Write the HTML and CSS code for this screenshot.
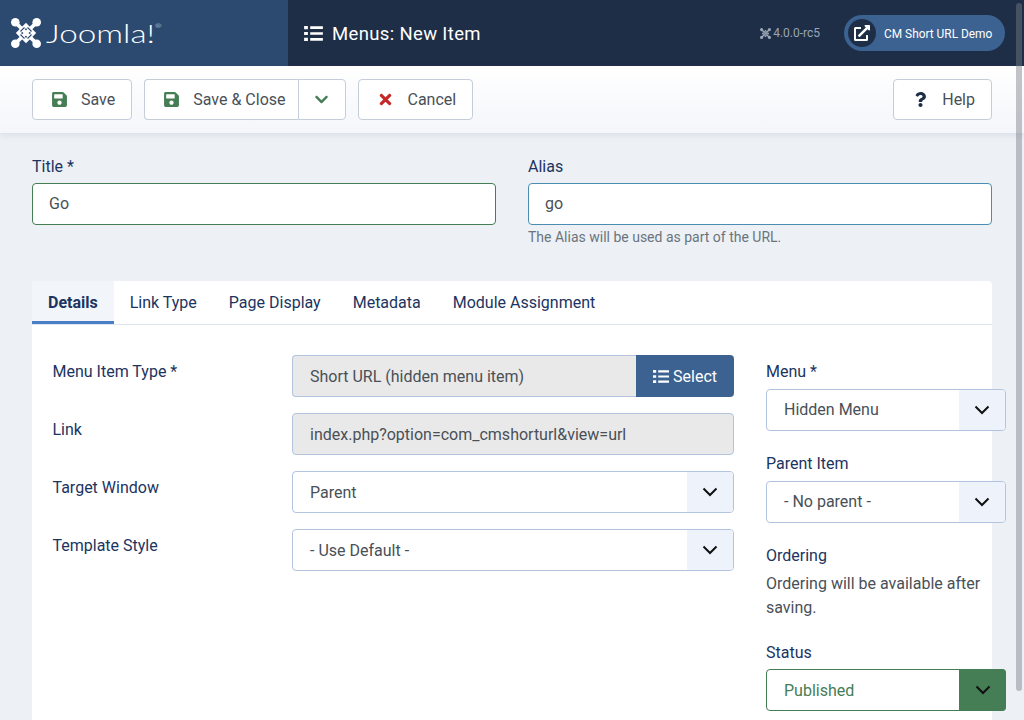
FILE: index.html
```html
<!DOCTYPE html>
<html lang="en">
<head>
    <meta charset="UTF-8">
    <meta name="viewport" content="width=device-width, initial-scale=1.0">
    <title>Menus: New Item</title>
    <link rel="stylesheet" href="styles.css">
</head>
<body>
    <!-- Icons -->
    <svg class="icon-defs" aria-hidden="true">
        <symbol id="i-save" viewBox="0 0 448 512"><path d="M433.941 129.941l-83.882-83.882A48 48 0 0 0 316.118 32H48C21.49 32 0 53.49 0 80v352c0 26.51 21.49 48 48 48h352c26.51 0 48-21.49 48-48V163.882a48 48 0 0 0-14.059-33.941zM224 416c-35.346 0-64-28.654-64-64 0-35.346 28.654-64 64-64s64 28.654 64 64c0 35.346-28.654 64-64 64zm96-304.52V212c0 6.627-5.373 12-12 12H76c-6.627 0-12-5.373-12-12V108c0-6.627 5.373-12 12-12h228.52c3.183 0 6.235 1.264 8.485 3.515l3.48 3.48A11.996 11.996 0 0 1 320 111.48z"/></symbol>
        <symbol id="i-times" viewBox="0 0 352 512"><path d="M242.72 256l100.07-100.07c12.28-12.28 12.28-32.19 0-44.48l-22.24-22.24c-12.28-12.28-32.19-12.28-44.48 0L176 189.28 75.93 89.21c-12.28-12.28-32.19-12.28-44.48 0L9.21 111.45c-12.28 12.28-12.28 32.19 0 44.48L109.28 256 9.21 356.07c-12.28 12.28-12.28 32.19 0 44.48l22.24 22.24c12.28 12.28 32.2 12.28 44.48 0L176 322.72l100.07 100.07c12.28 12.28 32.2 12.28 44.48 0l22.24-22.24c12.28-12.28 12.28-32.19 0-44.48L242.72 256z"/></symbol>
        <symbol id="i-chevron" viewBox="0 0 448 512"><path d="M207.029 381.476L12.686 187.132c-9.373-9.373-9.373-24.569 0-33.941l22.667-22.667c9.357-9.357 24.522-9.375 33.901-.04L224 284.505l154.745-154.021c9.379-9.335 24.544-9.317 33.901.04l22.667 22.667c9.373 9.373 9.373 24.569 0 33.941L240.971 381.476c-9.373 9.372-24.569 9.372-33.942 0z"/></symbol>
        <symbol id="i-caret" viewBox="0 0 16 10"><path d="M1.500 1.500L8 8l6.500-6.500" fill="none" stroke="currentColor" stroke-width="2"/></symbol>
        <symbol id="i-question" viewBox="0 0 384 512"><path d="M202.021 0C122.202 0 70.503 32.703 29.914 91.026c-7.363 10.58-5.093 25.086 5.178 32.874l43.138 32.709c10.373 7.865 25.132 6.026 33.253-4.148 25.049-31.381 43.63-49.449 82.757-49.449 30.764 0 68.816 19.799 68.816 49.631 0 22.552-18.617 34.134-48.993 51.164-35.423 19.86-82.299 44.576-82.299 106.405V320c0 13.255 10.745 24 24 24h72.471c13.255 0 24-10.745 24-24v-5.773c0-42.86 125.268-44.645 125.268-160.627C377.504 66.256 286.902 0 202.021 0zM192 373.459c-38.196 0-69.271 31.075-69.271 69.271 0 38.195 31.075 69.27 69.271 69.27s69.271-31.075 69.271-69.271-31.075-69.27-69.271-69.27z"/></symbol>
        <symbol id="i-external" viewBox="0 0 512 512"><path d="M432 320h-32a16 16 0 0 0-16 16v112H64V128h144a16 16 0 0 0 16-16V80a16 16 0 0 0-16-16H48a48 48 0 0 0-48 48v352a48 48 0 0 0 48 48h352a48 48 0 0 0 48-48V336a16 16 0 0 0-16-16zM488 0H360c-21.37 0-32.05 25.91-17 41l35.73 35.73L135 320.37a24 24 0 0 0 0 34L157.67 377a24 24 0 0 0 34 0l243.61-243.68L471 169c15 15 41 4.5 41-17V24a24 24 0 0 0-24-24z"/></symbol>
        <symbol id="i-list" viewBox="0 0 20 16"><path d="M0 0h4v3.400H0zM0 6.300h4v3.400H0zM0 12.600h4V16H0zM6.500.3H20v2.800H6.500zM6.500 6.600H20v2.800H6.500zM6.500 12.900H20v2.800H6.500z"/></symbol>
        <symbol id="i-joomla" viewBox="0 0 30 30">
            <g fill="none">
                <path class="mark-band" d="M15 7.500L22.500 15 15 22.500 7.500 15z"/>
                <path class="mark-gap" d="M4.500 4.500L12 12M25.500 4.500L18 12M25.500 25.500L18 18M4.500 25.500L12 18"/>
                <path class="mark-band" d="M4.500 4.500L12.500 12.500M25.500 4.500L17.500 12.500M25.500 25.500L17.500 17.500M4.500 25.500L12.500 17.500"/>
                <path class="mark-gap" d="M9.500 13.500L13.500 9.500M20.500 13.500L16.500 9.500M20.500 16.500L16.500 20.500M9.500 16.500L13.500 20.500"/>
                <path class="mark-band" d="M12 12L18 18M18 12L12 18"/>
            </g>
            <g fill="currentColor">
                <circle cx="4.300" cy="4.300" r="4.300"/>
                <circle cx="25.700" cy="4.300" r="4.300"/>
                <circle cx="25.700" cy="25.700" r="4.300"/>
                <circle cx="4.300" cy="25.700" r="4.300"/>
            </g>
        </symbol>
    </svg>

    <!-- Header -->
    <header class="header">
        <div class="brand">
            <svg class="brand-mark"><use href="#i-joomla"/></svg>
            <span class="brand-name">Joomla!<sup class="brand-reg">®</sup></span>
        </div>
        <div class="page-title">
            <svg class="page-title-icon"><use href="#i-list"/></svg>
            <h1>Menus: New Item</h1>
        </div>
        <div class="header-right">
            <span class="version"><svg class="version-icon"><use href="#i-joomla"/></svg> 4.0.0-rc5</span>
            <a class="site-link" href="#">
                <span class="site-link-icon"><svg><use href="#i-external"/></svg></span>
                <span class="site-link-text">CM Short URL Demo</span>
            </a>
        </div>
    </header>

    <!-- Toolbar -->
    <div class="toolbar">
        <button class="btn" type="button"><svg class="btn-icon icon-green"><use href="#i-save"/></svg>Save</button>
        <div class="btn-group">
            <button class="btn" type="button"><svg class="btn-icon icon-green"><use href="#i-save"/></svg>Save &amp; Close</button>
            <button class="btn btn-caret" type="button"><svg class="caret-icon"><use href="#i-chevron"/></svg></button>
        </div>
        <button class="btn btn-cancel" type="button"><svg class="btn-icon icon-red"><use href="#i-times"/></svg>Cancel</button>
        <button class="btn btn-help" type="button"><svg class="btn-icon icon-navy"><use href="#i-question"/></svg>Help</button>
    </div>

    <!-- Content -->
    <main class="content">
        <div class="title-row">
            <div class="field">
                <label for="title">Title *</label>
                <input class="input input-valid" type="text" id="title" value="Go">
            </div>
            <div class="field">
                <label for="alias">Alias</label>
                <input class="input input-alias" type="text" id="alias" value="go">
                <p class="hint">The Alias will be used as part of the URL.</p>
            </div>
        </div>

        <section class="card">
            <nav class="tabs">
                <a class="tab active" href="#">Details</a>
                <a class="tab" href="#">Link Type</a>
                <a class="tab" href="#">Page Display</a>
                <a class="tab" href="#">Metadata</a>
                <a class="tab" href="#">Module Assignment</a>
            </nav>
            <div class="tab-body">
                <div class="main-col">
                    <div class="row">
                        <label>Menu Item Type *</label>
                        <div class="input-group">
                            <input class="input input-readonly" type="text" value="Short URL (hidden menu item)" readonly>
                            <button class="btn-select" type="button"><svg class="select-icon"><use href="#i-list"/></svg>Select</button>
                        </div>
                    </div>
                    <div class="row">
                        <label>Link</label>
                        <input class="input input-readonly" type="text" value="index.php?option=com_cmshorturl&amp;view=url" readonly>
                    </div>
                    <div class="row">
                        <label>Target Window</label>
                        <div class="select-box">
                            <select><option>Parent</option></select>
                            <span class="select-arrow"><svg><use href="#i-caret"/></svg></span>
                        </div>
                    </div>
                    <div class="row">
                        <label>Template Style</label>
                        <div class="select-box">
                            <select><option>- Use Default -</option></select>
                            <span class="select-arrow"><svg><use href="#i-caret"/></svg></span>
                        </div>
                    </div>
                </div>
                <aside class="side-col">
                    <div class="side-field">
                        <label>Menu *</label>
                        <div class="select-box">
                            <select><option>Hidden Menu</option></select>
                            <span class="select-arrow"><svg><use href="#i-caret"/></svg></span>
                        </div>
                    </div>
                    <div class="side-field">
                        <label>Parent Item</label>
                        <div class="select-box">
                            <select><option>- No parent -</option></select>
                            <span class="select-arrow"><svg><use href="#i-caret"/></svg></span>
                        </div>
                    </div>
                    <div class="side-field">
                        <label>Ordering</label>
                        <p class="side-note">Ordering will be available after saving.</p>
                    </div>
                    <div class="side-field side-status">
                        <label>Status</label>
                        <div class="select-box select-published">
                            <select><option>Published</option></select>
                            <span class="select-arrow"><svg><use href="#i-caret"/></svg></span>
                        </div>
                    </div>
                </aside>
            </div>
        </section>
    </main>

    <div class="scroll-thumb"></div>
</body>
</html>
```

FILE: styles.css
```css
* {
    box-sizing: border-box;
}

html, body {
    height: 720px;
    overflow: hidden;
}

body {
    margin: 0;
    background-color: #edf1f6;
    color: #495057;
    font-family: Roboto, "Liberation Sans", sans-serif;
    font-size: 16px;
    line-height: 24px;
}

.icon-defs {
    display: none;
}

/* Joomla mark: bands with a gap colour where they cross */
.mark-gap {
    stroke: var(--mark-gap);
    stroke-width: 1.200;
}

.mark-band {
    stroke: currentColor;
    stroke-width: 3.800;
}

/* Header */
.header {
    display: flex;
    height: 66px;
    background-color: #1f2e47;
    color: white;
}

.brand {
    display: flex;
    align-items: center;
    width: 288px;
    padding-left: 11px;
    background-color: #2c4a70;
}

.brand-mark {
    width: 30px;
    height: 30px;
    color: white;
    --mark-gap: #2c4a70;
}

.brand-name {
    display: inline-block;
    margin-left: 5px;
    font-family: Lato, sans-serif;
    font-weight: 300;
    font-size: 26px;
    line-height: 34px;
    transform: scaleX(1.28);
    transform-origin: left center;
}

.brand-reg {
    font-size: 6px;
    line-height: 0;
    vertical-align: 15px;
}

.page-title {
    display: flex;
    align-items: center;
    padding-left: 16px;
}

.page-title-icon {
    width: 19px;
    height: 15px;
    margin-right: 9px;
    fill: white;
}

.page-title h1 {
    margin: 2px 0 0;
    font-size: 18.500px;
    font-weight: 400;
    letter-spacing: 0.35px;
}

.header-right {
    display: flex;
    align-items: center;
    margin-left: auto;
    padding-right: 19px;
}

.version {
    display: flex;
    align-items: center;
    margin-right: 24px;
    color: #9aa5b5;
    font-size: 12px;
}

.version-icon {
    width: 11px;
    height: 11px;
    margin-right: 2px;
    --mark-gap: #1f2e47;
}

.site-link {
    display: flex;
    align-items: center;
    width: 161px;
    height: 36px;
    padding-left: 4px;
    border-radius: 18px;
    background-color: #3c6292;
    color: white;
    font-size: 11.900px;
    text-decoration: none;
}

.site-link-text {
    margin-top: 1px;
}

.site-link-icon {
    display: flex;
    align-items: center;
    justify-content: center;
    width: 28px;
    height: 28px;
    margin-right: 8px;
    border-radius: 50%;
    background-color: #1f2e47;
}

.site-link-icon svg {
    width: 16px;
    height: 16px;
    fill: white;
}

/* Toolbar */
.toolbar {
    display: flex;
    gap: 12px;
    height: 67px;
    padding: 13px 32px 0;
    background: linear-gradient(#ffffff, #f4f6fa);
    box-shadow: 0 2px 6px rgba(30, 50, 90, 0.1);
}

.btn {
    display: flex;
    align-items: center;
    height: 41px;
    padding: 0 16px 0 19px;
    border: 1px solid #c5cdd9;
    border-radius: 4px;
    background-color: white;
    color: #495057;
    font-family: inherit;
    font-size: 16px;
}

.btn-icon {
    width: 15px;
    height: 17px;
    margin-right: 14px;
}

.icon-green {
    fill: #457d54;
}

.icon-red {
    fill: #c52827;
}

.icon-navy {
    fill: #1f2e47;
}

.btn-group {
    display: flex;
}

.btn-group .btn:first-child {
    border-radius: 4px 0 0 4px;
    border-right: 0;
    padding-right: 12px;
}

.btn-caret {
    width: 48px;
    padding: 0;
    justify-content: center;
    border-radius: 0 4px 4px 0;
}

.caret-icon {
    width: 13px;
    height: 15px;
    fill: #457d54;
}

.btn-cancel .btn-icon {
    margin-right: 15px;
}

.btn-help {
    margin-left: auto;
}

.btn-help .btn-icon {
    height: 15px;
}

/* Content */
.content {
    padding: 22px 32px 0;
}

label {
    display: block;
    color: #1b3461;
}

.title-row {
    display: grid;
    grid-template-columns: 464px 464px;
    gap: 32px;
    height: 126px;
}

.field label {
    margin-bottom: 4px;
}

.input {
    display: block;
    width: 100%;
    height: 42px;
    padding: 0 16px;
    border: 1px solid #b2c4df;
    border-radius: 4px;
    background-color: white;
    color: #495057;
    font-family: inherit;
    font-size: 16px;
}

.field .input {
    padding-bottom: 2px;
}

.input-valid {
    border-color: #457d54;
}

.input-alias {
    border-color: #4a8db0;
}

.input-readonly {
    padding-left: 17px;
    background-color: #e9e9e9;
}

.hint {
    margin: 0;
    color: #6b747d;
    font-size: 14px;
}

/* Tabs */
.card {
    height: 439px;
    background-color: white;
    border-radius: 4px 4px 0 0;
}

.tabs {
    display: flex;
    height: 44px;
    border-bottom: 1px solid #dee5f0;
}

.tab {
    height: 43px;
    padding: 10px 16px 0;
    color: #1b3461;
    text-decoration: none;
}

.tab.active {
    border-bottom: 3px solid #4a7fc7;
    background-color: #f2f6fa;
    font-weight: 700;
}

.tab-body {
    display: grid;
    grid-template-columns: 682px 240px;
    gap: 31.500px;
    padding: 30px 0 0 20.500px;
}

.row {
    display: grid;
    grid-template-columns: 239.500px 442px;
    margin-bottom: 16px;
}

.row label {
    padding-top: 5px;
}

.input-group {
    display: flex;
}

.input-group .input {
    flex: 1;
    border-radius: 4px 0 0 4px;
    border-right: 0;
}

.btn-select {
    display: flex;
    align-items: center;
    justify-content: center;
    width: 98px;
    border: 0;
    border-radius: 0 4px 4px 0;
    background-color: #3c6292;
    color: white;
    font-family: inherit;
    font-size: 16px;
}

.select-icon {
    width: 16px;
    height: 13px;
    margin-right: 4px;
    fill: white;
}

.select-box {
    position: relative;
}

.select-box select {
    display: block;
    width: 100%;
    height: 42px;
    padding: 0 17px;
    border: 1px solid #b2c4df;
    border-radius: 4px;
    background-color: white;
    color: #495057;
    font-family: inherit;
    font-size: 16px;
    appearance: none;
}

/* sits over the right end of the select */
.select-arrow {
    position: absolute;
    top: 1px;
    right: 1px;
    bottom: 1px;
    display: flex;
    align-items: center;
    justify-content: center;
    width: 46px;
    border-radius: 0 3px 3px 0;
    background-color: #eef3fb;
    color: #111;
}

.select-arrow svg {
    width: 16px;
    height: 10px;
}

.select-published select {
    border-color: #457d54;
    color: #457d54;
}

.select-published .select-arrow {
    top: 0;
    right: 0;
    bottom: 0;
    width: 47px;
    border-radius: 0 4px 4px 0;
    background-color: #457d54;
}

/* Side column */
.side-col {
    padding-top: 5px;
}

.side-field {
    margin-bottom: 21px;
}

.side-field label {
    margin-bottom: 5px;
}

.side-field select {
    padding-bottom: 2px;
}

.side-note {
    margin: -1px 0 0;
}

.side-status {
    margin-bottom: 0;
}

.side-status label {
    margin-bottom: 4px;
}

.side-status select {
    padding-bottom: 0;
}

/* Overlay scrollbar */
.scroll-thumb {
    position: absolute;
    top: 3px;
    right: 2px;
    width: 6px;
    height: 688px;
    border-radius: 3px;
    background-color: rgba(120, 125, 135, 0.45);
}
```
